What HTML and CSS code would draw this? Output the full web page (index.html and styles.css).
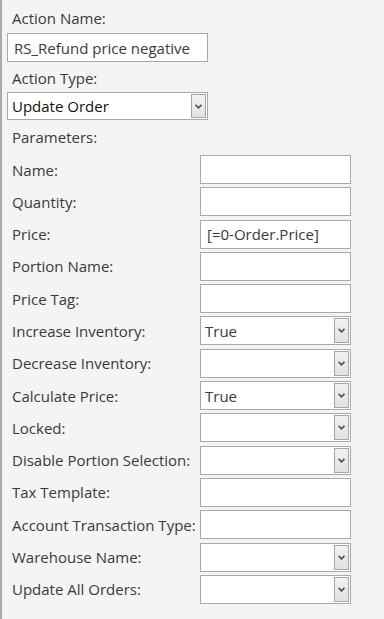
FILE: index.html
```html
<!DOCTYPE html>
<html lang="en">
<head>
    <meta charset="UTF-8">
    <meta name="viewport" content="width=device-width, initial-scale=1.0">
    <title>Action Editor</title>
    <link rel="stylesheet" href="styles.css">
</head>
<body>
    <div class="panel">
        <div class="lbl lbl-first">Action Name:</div>
        <input type="text" class="txt txt-wide" value="RS_Refund price negative">

        <div class="lbl lbl-type">Action Type:</div>
        <div class="combo combo-wide">
            <span class="combo-text">Update Order</span>
            <span class="combo-btn"><svg width="7" height="5" viewBox="0 0 7 5"><path d="M0.5 0.8 L3.5 3.8 L6.5 0.8" fill="none" stroke="#555" stroke-width="1.8"/></svg></span>
        </div>

        <div class="lbl lbl-params">Parameters:</div>

        <div class="params">
            <label class="p-lbl">Name:</label>
            <input type="text" class="txt">

            <label class="p-lbl">Quantity:</label>
            <input type="text" class="txt">

            <label class="p-lbl">Price:</label>
            <input type="text" class="txt" value="[=0-Order.Price]">

            <label class="p-lbl">Portion Name:</label>
            <input type="text" class="txt">

            <label class="p-lbl">Price Tag:</label>
            <input type="text" class="txt">

            <label class="p-lbl">Increase Inventory:</label>
            <div class="combo">
                <span class="combo-text">True</span>
                <span class="combo-btn"><svg width="7" height="5" viewBox="0 0 7 5"><path d="M0.5 0.8 L3.5 3.8 L6.5 0.8" fill="none" stroke="#555" stroke-width="1.8"/></svg></span>
            </div>

            <label class="p-lbl">Decrease Inventory:</label>
            <div class="combo">
                <span class="combo-text"></span>
                <span class="combo-btn"><svg width="7" height="5" viewBox="0 0 7 5"><path d="M0.5 0.8 L3.5 3.8 L6.5 0.8" fill="none" stroke="#555" stroke-width="1.8"/></svg></span>
            </div>

            <label class="p-lbl">Calculate Price:</label>
            <div class="combo">
                <span class="combo-text">True</span>
                <span class="combo-btn"><svg width="7" height="5" viewBox="0 0 7 5"><path d="M0.5 0.8 L3.5 3.8 L6.5 0.8" fill="none" stroke="#555" stroke-width="1.8"/></svg></span>
            </div>

            <label class="p-lbl">Locked:</label>
            <div class="combo">
                <span class="combo-text"></span>
                <span class="combo-btn"><svg width="7" height="5" viewBox="0 0 7 5"><path d="M0.5 0.8 L3.5 3.8 L6.5 0.8" fill="none" stroke="#555" stroke-width="1.8"/></svg></span>
            </div>

            <label class="p-lbl">Disable Portion Selection:</label>
            <div class="combo">
                <span class="combo-text"></span>
                <span class="combo-btn"><svg width="7" height="5" viewBox="0 0 7 5"><path d="M0.5 0.8 L3.5 3.8 L6.5 0.8" fill="none" stroke="#555" stroke-width="1.8"/></svg></span>
            </div>

            <label class="p-lbl">Tax Template:</label>
            <input type="text" class="txt">

            <label class="p-lbl">Account Transaction Type:</label>
            <input type="text" class="txt">

            <label class="p-lbl">Warehouse Name:</label>
            <div class="combo">
                <span class="combo-text"></span>
                <span class="combo-btn"><svg width="7" height="5" viewBox="0 0 7 5"><path d="M0.5 0.8 L3.5 3.8 L6.5 0.8" fill="none" stroke="#555" stroke-width="1.8"/></svg></span>
            </div>

            <label class="p-lbl">Update All Orders:</label>
            <div class="combo">
                <span class="combo-text"></span>
                <span class="combo-btn"><svg width="7" height="5" viewBox="0 0 7 5"><path d="M0.5 0.8 L3.5 3.8 L6.5 0.8" fill="none" stroke="#555" stroke-width="1.8"/></svg></span>
            </div>
        </div>
    </div>
</body>
</html>
```

FILE: styles.css
```css
html, body {
    margin: 0;
    height: 100%;
    background-color: #f4f4f4;
}
body {
    font-family: 'Open Sans', 'Noto Sans', sans-serif;
    font-size: 15px;
    color: #3a3a3a;
}
.panel {
    box-sizing: border-box;
    min-height: 100%;
    border-left: 2px solid #aaaaaa;
    padding: 8px 0 0 5px;
}
.lbl {
    line-height: 20px;
    padding-left: 5px;
}
.lbl-first {
    margin-bottom: 5px;
}
.lbl-type {
    margin-top: 6px;
    margin-bottom: 4px;
}
.lbl-params {
    margin-top: 7px;
    margin-bottom: 8px;
}
.txt {
    box-sizing: border-box;
    display: block;
    width: 151px;
    height: 29px;
    margin: 0;
    padding: 0 6px;
    border: 1px solid #a9a9a9;
    background: #fff;
    font-family: inherit;
    font-size: 15px;
    color: #3a3a3a;
    outline: none;
}
.txt-wide {
    width: 201px;
}
.combo {
    box-sizing: border-box;
    display: flex;
    align-items: center;
    width: 151px;
    height: 29px;
    padding: 1px;
    border: 1px solid #a9a9a9;
    background: #fff;
}
.combo-wide {
    width: 201px;
    height: 28px;
    color: #111;
}
.combo-text {
    flex: 1;
    padding-left: 3px;
}
.combo-btn {
    box-sizing: border-box;
    width: 15px;
    align-self: stretch;
    display: flex;
    align-items: center;
    justify-content: center;
    border: 1px solid #a6a6a6;
    background: linear-gradient(#f2f2f2, #e2e2e2);
}
.params {
    display: grid;
    grid-template-columns: 193px 151px;
    grid-auto-rows: 29px;
    row-gap: 3.3px;
    align-items: center;
}
.p-lbl {
    padding-left: 5px;
    white-space: nowrap;
}
```
